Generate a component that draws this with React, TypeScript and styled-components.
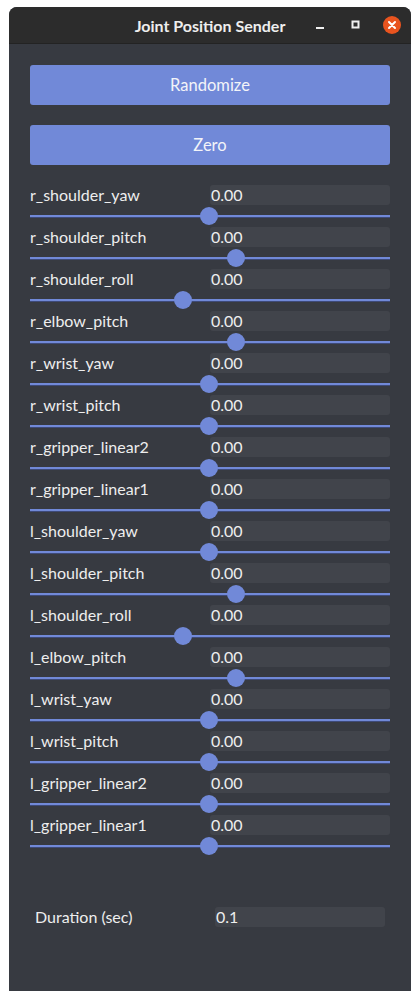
import type { FC } from 'react'
import { styled, createGlobalStyle } from 'styled-components'

const GlobalStyle = createGlobalStyle`
  html, body {
    margin: 0;
    padding: 0;
    background: #ffffff;
  }
  body {
    font-family: 'Lato', 'Noto Sans', sans-serif;
  }
`

const Window = styled.div`
  margin: 7px 0 0 9px;
  width: 402px;
  height: 984px;
  display: flex;
  flex-direction: column;
  background: #373a41;
  border-radius: 8px 8px 0 0;
  overflow: hidden;
`

const TitleBar = styled.div`
  position: relative;
  height: 37px;
  flex: none;
  background: #2c2c2c;
  border-bottom: 1px solid #232323;
  box-sizing: border-box;
  display: flex;
  align-items: center;
  justify-content: center;
`

const Title = styled.div`
  color: #eeeeee;
  font-size: 16px;
  font-weight: 700;
`

const Controls = styled.div`
  position: absolute;
  right: 10px;
  top: 0;
  bottom: 0;
  display: flex;
  align-items: center;
  gap: 18px;
`

const CtlButton = styled.div`
  width: 18px;
  height: 18px;
  display: grid;
  place-items: center;
`

const CloseButton = styled(CtlButton)`
  border-radius: 50%;
  background: #e9541f;
`

const Body = styled.div`
  flex: 1;
  padding: 21px 21px 0;
  display: flex;
  flex-direction: column;
`

const ActionButton = styled.div`
  height: 40px;
  border-radius: 3px;
  background: #7189d8;
  color: #f3f4f8;
  font-size: 16.5px;
  display: flex;
  align-items: center;
  justify-content: center;
  margin-bottom: 20px;
`

const JointList = styled.div`
  display: flex;
  flex-direction: column;
`

const JointRow = styled.div`
  display: flex;
  flex-direction: column;
  height: 42px;
`

const FieldRow = styled.div<{ $inset?: number }>`
  display: grid;
  grid-template-columns: 180px 1fr;
  align-items: center;
  height: 20px;
  padding: 0 ${(p) => p.$inset ?? 0}px;
`

const Label = styled.div`
  color: #eeeeee;
  font-size: 16px;
  line-height: 20px;
  height: 20px;
  white-space: nowrap;
`

const Field = styled.div`
  height: 20px;
  background: #41444b;
  border-radius: 3px;
  color: #eeeeee;
  font-size: 16px;
  line-height: 20px;
  padding-left: 1px;
`

const Slider = styled.div`
  position: relative;
  height: 22px;
`

const Track = styled.div`
  position: absolute;
  left: 0;
  right: 0;
  top: 10px;
  height: 2px;
  background: #7189d8;
  border-bottom: 1px solid #3e4a77;
`

const Thumb = styled.div`
  position: absolute;
  top: 2px;
  width: 18px;
  height: 18px;
  margin-left: -9px;
  border-radius: 50%;
  background: #7189d8;
`

const DurationBlock = styled.div`
  margin-top: 50px;
`

const joints: [string, number][] = [
  ['r_shoulder_yaw', 179],
  ['r_shoulder_pitch', 206],
  ['r_shoulder_roll', 153],
  ['r_elbow_pitch', 206],
  ['r_wrist_yaw', 179],
  ['r_wrist_pitch', 179],
  ['r_gripper_linear2', 179],
  ['r_gripper_linear1', 179],
  ['l_shoulder_yaw', 179],
  ['l_shoulder_pitch', 206],
  ['l_shoulder_roll', 153],
  ['l_elbow_pitch', 206],
  ['l_wrist_yaw', 179],
  ['l_wrist_pitch', 179],
  ['l_gripper_linear2', 179],
  ['l_gripper_linear1', 179],
]

const App: FC = () => {
  return (
    <>
      <GlobalStyle />
      <Window>
        <TitleBar>
          <Title>Joint Position Sender</Title>
          <Controls>
            <CtlButton>
              <svg width="10" height="10" viewBox="0 0 10 10">
                <rect x="1" y="7" width="8" height="2" fill="#f0f0f0" />
              </svg>
            </CtlButton>
            <CtlButton>
              <svg width="10" height="10" viewBox="0 0 10 10">
                <rect x="1.5" y="1.5" width="6" height="6" fill="none" stroke="#f0f0f0" strokeWidth="2" />
              </svg>
            </CtlButton>
            <CloseButton>
              <svg width="10" height="10" viewBox="0 0 10 10">
                <path d="M2 2 L8 8 M8 2 L2 8" stroke="#ffffff" strokeWidth="2" strokeLinecap="round" />
              </svg>
            </CloseButton>
          </Controls>
        </TitleBar>
        <Body>
          <ActionButton>Randomize</ActionButton>
          <ActionButton>Zero</ActionButton>
          <JointList>
            {joints.map(([name, pos]) => (
              <JointRow key={name}>
                <FieldRow>
                  <Label>{name}</Label>
                  <Field>0.00</Field>
                </FieldRow>
                <Slider>
                  <Track />
                  <Thumb style={{ left: pos }} />
                </Slider>
              </JointRow>
            ))}
          </JointList>
          <DurationBlock>
            <FieldRow $inset={5}>
              <Label>Duration (sec)</Label>
              <Field>0.1</Field>
            </FieldRow>
          </DurationBlock>
        </Body>
      </Window>
    </>
  )
}

export default App
